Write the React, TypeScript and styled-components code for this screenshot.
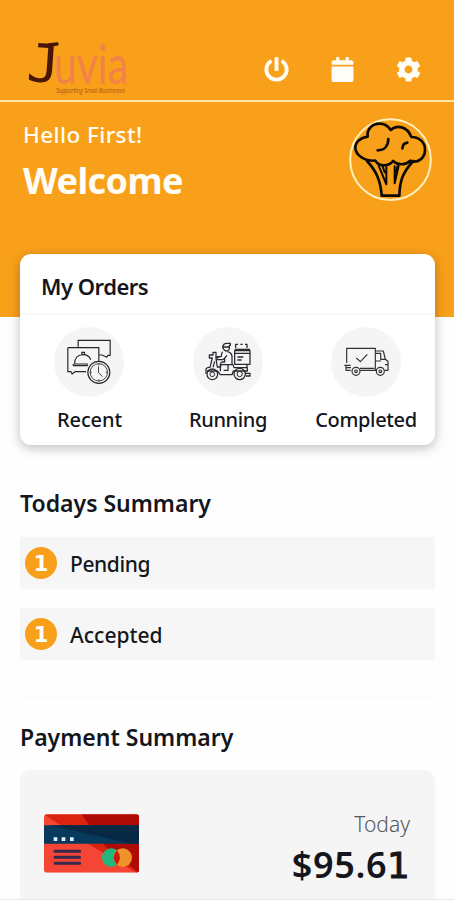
import React from "react";
import styled, { createGlobalStyle } from "styled-components";
import { FaPowerOff, FaCalendar, FaCog } from "react-icons/fa";

const GlobalStyle = createGlobalStyle`
  * { box-sizing: border-box; }
  body {
    margin: 0;
    background: #fff;
    font-family: "Noto Sans", "Open Sans", sans-serif;
    color: #14161c;
  }
`;

const Screen = styled.div`
  width: 454px;
  height: 900px;
  overflow: hidden;
  background: #fefefe;
  border-bottom: 1px solid #e9e9e9;
`;

const Hero = styled.header`
  height: 317px;
  background: #f9a01b;
  color: #fffdf5;
`;

const TopBar = styled.div`
  display: flex;
  justify-content: space-between;
  height: 102px;
  padding: 0 33px 0 26px;
  border-bottom: 2px solid #ffe6a6;
`;

const Actions = styled.nav`
  display: flex;
  align-items: center;
  gap: 41px;
  height: 62px;
  margin-top: 38px;
`;

const IconButton = styled.button`
  display: flex;
  padding: 0;
  border: 0;
  background: none;
  color: #fffdf8;
  font-size: 25px;
`;

const Greeting = styled.div`
  display: flex;
  justify-content: space-between;
  padding: 16px 22px 0 23px;
`;

const Hello = styled.p`
  margin: 1px 0 0;
  font-size: 22.5px;
  line-height: 32px;
  font-weight: 500;
  letter-spacing: 0.4px;
`;

const Welcome = styled.h1`
  margin: 5px 0 0;
  font-size: 36px;
  line-height: 50px;
  font-weight: 700;
  letter-spacing: -0.6px;
`;

const OrdersCard = styled.section`
  position: relative;
  height: 191px;
  margin: -63px 19px 0 20px;
  border-radius: 11px;
  background: #fff;
  box-shadow: 0 3px 12px rgba(0, 0, 0, 0.26);
`;

const CardTitle = styled.h2`
  height: 61px;
  margin: 0;
  padding: 16px 21px 0;
  border-bottom: 2px solid #f9f9f9;
  font-size: 22px;
  line-height: 32px;
  font-weight: 600;
  letter-spacing: -0.5px;
`;

const OrderList = styled.div`
  display: grid;
  grid-template-columns: 139px 138px 138px;
  padding-top: 12px;
`;

const OrderItem = styled.div`
  display: flex;
  flex-direction: column;
  align-items: center;
`;

const Disc = styled.div`
  width: 70px;
  height: 70px;
  margin-left: -1px;
  border-radius: 50%;
  background: #f5f5f5;
`;

const Label = styled.span<{ $spacing: number }>`
  margin-top: 8px;
  font-size: 20px;
  line-height: 29px;
  font-weight: 500;
  white-space: nowrap;
  letter-spacing: ${(p) => p.$spacing}px;
`;

const Section = styled.section<{ $top: number }>`
  margin: ${(p) => p.$top}px 19px 0 20px;
`;

const SectionTitle = styled.h2`
  margin: 0;
  font-size: 23px;
  line-height: 34px;
  font-weight: 600;
`;

const SummaryList = styled.div`
  display: flex;
  flex-direction: column;
  gap: 19px;
  margin-top: 17px;
`;

const SummaryRow = styled.div`
  display: flex;
  align-items: center;
  gap: 13px;
  height: 52px;
  padding-left: 5px;
  background: #f6f6f6;
`;

const Count = styled.span`
  width: 32px;
  height: 32px;
  border-radius: 50%;
  background: #f9a01b;
  color: #fff;
  font: 700 21px/35px "DejaVu Sans", sans-serif;
  text-align: center;
`;

const RowLabel = styled.span<{ $spacing: number }>`
  padding-top: 2px;
  font-size: 21px;
  line-height: 28px;
  font-weight: 500;
  letter-spacing: ${(p) => p.$spacing}px;
`;

const Divider = styled.hr`
  height: 1px;
  margin: 36px 19px 0 20px;
  border: 0;
  background: #fafafa;
`;

const PaymentCard = styled.div`
  display: flex;
  justify-content: space-between;
  height: 150px;
  margin-top: 16px;
  padding: 38px 25px 0 24px;
  border-radius: 11px;
  background: #f5f5f5;
`;

const CardSlot = styled.div`
  padding-top: 6px;
`;

const Amounts = styled.div`
  text-align: right;
`;

const Period = styled.div`
  font-size: 21px;
  line-height: 32px;
  font-weight: 300;
  color: #55575c;
`;

const Amount = styled.div`
  margin-top: 1px;
  font-size: 36px;
  line-height: 48px;
  font-weight: 600;
  letter-spacing: 0.6px;
`;

const SlabOne = styled.span`
  font: 400 35px/48px "DejaVu Sans", sans-serif;
  -webkit-text-stroke: 1.2px currentColor;
`;

const Art = styled.svg`
  display: block;
`;

const Logo = () => (
  <Art width="112" height="100" viewBox="26 0 112 100">
    <text x="27" y="82" fontFamily="DejaVu Sans Mono" fontSize="53" textLength="33" lengthAdjust="spacingAndGlyphs" fill="#481506" transform="rotate(4 43 64)">J</text>
    <path d="M49 45L57 44" stroke="#481506" strokeWidth="3.500" strokeLinecap="round" />
    <text x="54" y="84" fontFamily="Lato" fontSize="54" textLength="74" lengthAdjust="spacingAndGlyphs" fill="#f28247">uvia</text>
    <text x="56" y="93" fontFamily="Open Sans" fontSize="7" fontStyle="italic" textLength="69" lengthAdjust="spacingAndGlyphs" fill="#a65313">Supporting Small Businesses</text>
  </Art>
);

const Broccoli = () => (
  <Art width="83" height="83" viewBox="357 235 249 249" fill="none" stroke="#0d0a05" strokeWidth="8" strokeLinecap="round" strokeLinejoin="round">
    <circle cx="481.500" cy="360" r="121" stroke="#fff0bd" strokeWidth="6" />
    <path d="M413 291C410 268 427 252 449 252C465 252 475 260 482 271C500 254 532 260 544 292C570 292 586 310 585 332C584 356 563 372 541 363C525 378 502 376 489 364C476 381 447 382 436 363C405 365 377 347 376 325C375 307 391 294 413 291Z" />
    <path d="M475 298C475 320 462 332 443 332M532 309C523 310 518 316 517 326" />
    <path d="M411 364C440 395 451 423 455 465V468H508C509 423 519 397 550 364" />
    <path d="M446 378L469 434V382M458 380L464 398M506 378L494 431V380M502 380L499 396" strokeWidth="6" />
  </Art>
);

const RecentIcon = () => (
  <Art width="70" height="70" viewBox="13.5 6 210 210" fill="none" stroke="#25252a" strokeWidth="3.500">
    <path d="M86 65V46H182V91H175L172 97L158 90H148M55 68H148V113M55 68V140H64L68 147L77 140H110" />
    <path d="M71 122H113V117H75C75 100 85 89 101 89C113 89 120 95 124 104M71 122V117M97 89V82H105V89" />
    <circle cx="148" cy="142" r="33" fill="#f5f5f5" />
    <circle cx="148" cy="142" r="26" strokeWidth="2.500" />
    <path d="M147 124V143L159 155M148 115V121M148 163V169M121 142H127M169 142H175" strokeWidth="2.500" />
  </Art>
);

const ScooterIcon = () => (
  <Art width="70" height="70" viewBox="9 6 210 210" fill="none" stroke="#292a2f" strokeWidth="3.800" strokeLinejoin="round">
    <circle cx="67" cy="148" r="16" />
    <circle cx="67" cy="148" r="7" strokeWidth="3" />
    <circle cx="149" cy="147" r="17" />
    <circle cx="149" cy="147" r="8" strokeWidth="3" />
    <path d="M48 146V132Q51 126 60 127L67 99H58V90H69V82H78V101L82 126H92V119H129L132 128H172V138H130L126 149H91L82 138H51M76 96H88M74 109L69 127" />
    <path d="M99 70V63Q101 55 110 55H121V61H118V71Q114 81 104 76ZM96 66H117M98 80Q94 83 94 94L81 96V104H99L104 99V111H96Q91 113 91 119V139M112 80Q125 83 126 94V118M104 99L111 91M101 136H114V120" />
    <path d="M134 77H180V118H134ZM134 85H180M142 96H160M142 105H155M137 69V58H144M151 58H158M165 58H171V69M134 73H180M171 118V127M166 145H180V153H167" />
  </Art>
);

const TruckIcon = () => (
  <Art width="70" height="70" viewBox="15 6 210 210" fill="none" stroke="#303035" strokeWidth="3.500" strokeLinejoin="round">
    <path d="M62 114V70H148V136M148 78H172L178 103L186 109V136H177M149 85H164V103H178M150 108H165M177 119H186M102 130H145M103 136H150M55 121H74M61 128H75M60 121V136H74" />
    <path d="M91 99L103 110L124 88" />
    <circle cx="90" cy="139" r="12" />
    <circle cx="163" cy="139" r="12" />
    <circle cx="90" cy="139" r="4" />
    <circle cx="163" cy="139" r="4" />
  </Art>
);

const CreditCard = () => (
  <Art width="96" height="60" viewBox="133 402 288 180">
    <clipPath id="card-shape"><rect x="133" y="403" width="285" height="175" rx="9" /></clipPath>
    <g clipPath="url(#card-shape)">
      <path fill="#f54535" d="M133 403H418V578H133Z" />
      <path fill="#db2410" d="M133 403H418V578H410L265 491L133 403Z" />
      <path fill="#ae0b07" d="M245 403H418V578L318 500L271 438Z" />
      <path fill="#073a5c" d="M133 436H418V491H133Z" />
      <path fill="#082944" d="M150 436H418V491H395L305 470Z" />
    </g>
    <path fill="#e5f2fb" d="M162 472h11v11h-11zM186 472h11v11h-11zM211 472h11v11h-11z" />
    <path stroke="#34284b" strokeWidth="9" strokeLinecap="round" d="M166 514H240M166 532H240M166 550H240" />
    <circle cx="335" cy="533" r="28" fill="#20b77c" />
    <circle cx="369" cy="533" r="28" fill="#ef922a" />
    <path fill="#c91b0c" d="M352 511Q332 533 352 555Q369 533 352 511Z" />
  </Art>
);

const orders = [
  { label: "Recent", icon: <RecentIcon />, spacing: -0.1 },
  { label: "Running", icon: <ScooterIcon />, spacing: -0.4 },
  { label: "Completed", icon: <TruckIcon />, spacing: -0.35 },
];

const summary = [
  { label: "Pending", count: 1, spacing: -0.4 },
  { label: "Accepted", count: 1, spacing: 0 },
];

export default function App() {
  return (
    <>
      <GlobalStyle />
      <Screen>
        <Hero>
          <TopBar>
            <Logo />
            <Actions>
              <IconButton aria-label="Log out"><FaPowerOff /></IconButton>
              <IconButton aria-label="Calendar"><FaCalendar /></IconButton>
              <IconButton aria-label="Settings"><FaCog /></IconButton>
            </Actions>
          </TopBar>
          <Greeting>
            <div>
              <Hello>Hello First!</Hello>
              <Welcome>Welcome</Welcome>
            </div>
            <Broccoli />
          </Greeting>
        </Hero>
        <OrdersCard>
          <CardTitle>My Orders</CardTitle>
          <OrderList>
            {orders.map((o) => (
              <OrderItem key={o.label}>
                <Disc>{o.icon}</Disc>
                <Label $spacing={o.spacing}>{o.label}</Label>
              </OrderItem>
            ))}
          </OrderList>
        </OrdersCard>
        <Section $top={41}>
          <SectionTitle>Todays Summary</SectionTitle>
          <SummaryList>
            {summary.map((s) => (
              <SummaryRow key={s.label}>
                <Count>{s.count}</Count>
                <RowLabel $spacing={s.spacing}>{s.label}</RowLabel>
              </SummaryRow>
            ))}
          </SummaryList>
        </Section>
        <Divider />
        <Section $top={23}>
          <SectionTitle>Payment Summary</SectionTitle>
          <PaymentCard>
            <CardSlot><CreditCard /></CardSlot>
            <Amounts>
              <Period>Today</Period>
              <Amount>$95.6<SlabOne>1</SlabOne></Amount>
            </Amounts>
          </PaymentCard>
        </Section>
      </Screen>
    </>
  );
}
